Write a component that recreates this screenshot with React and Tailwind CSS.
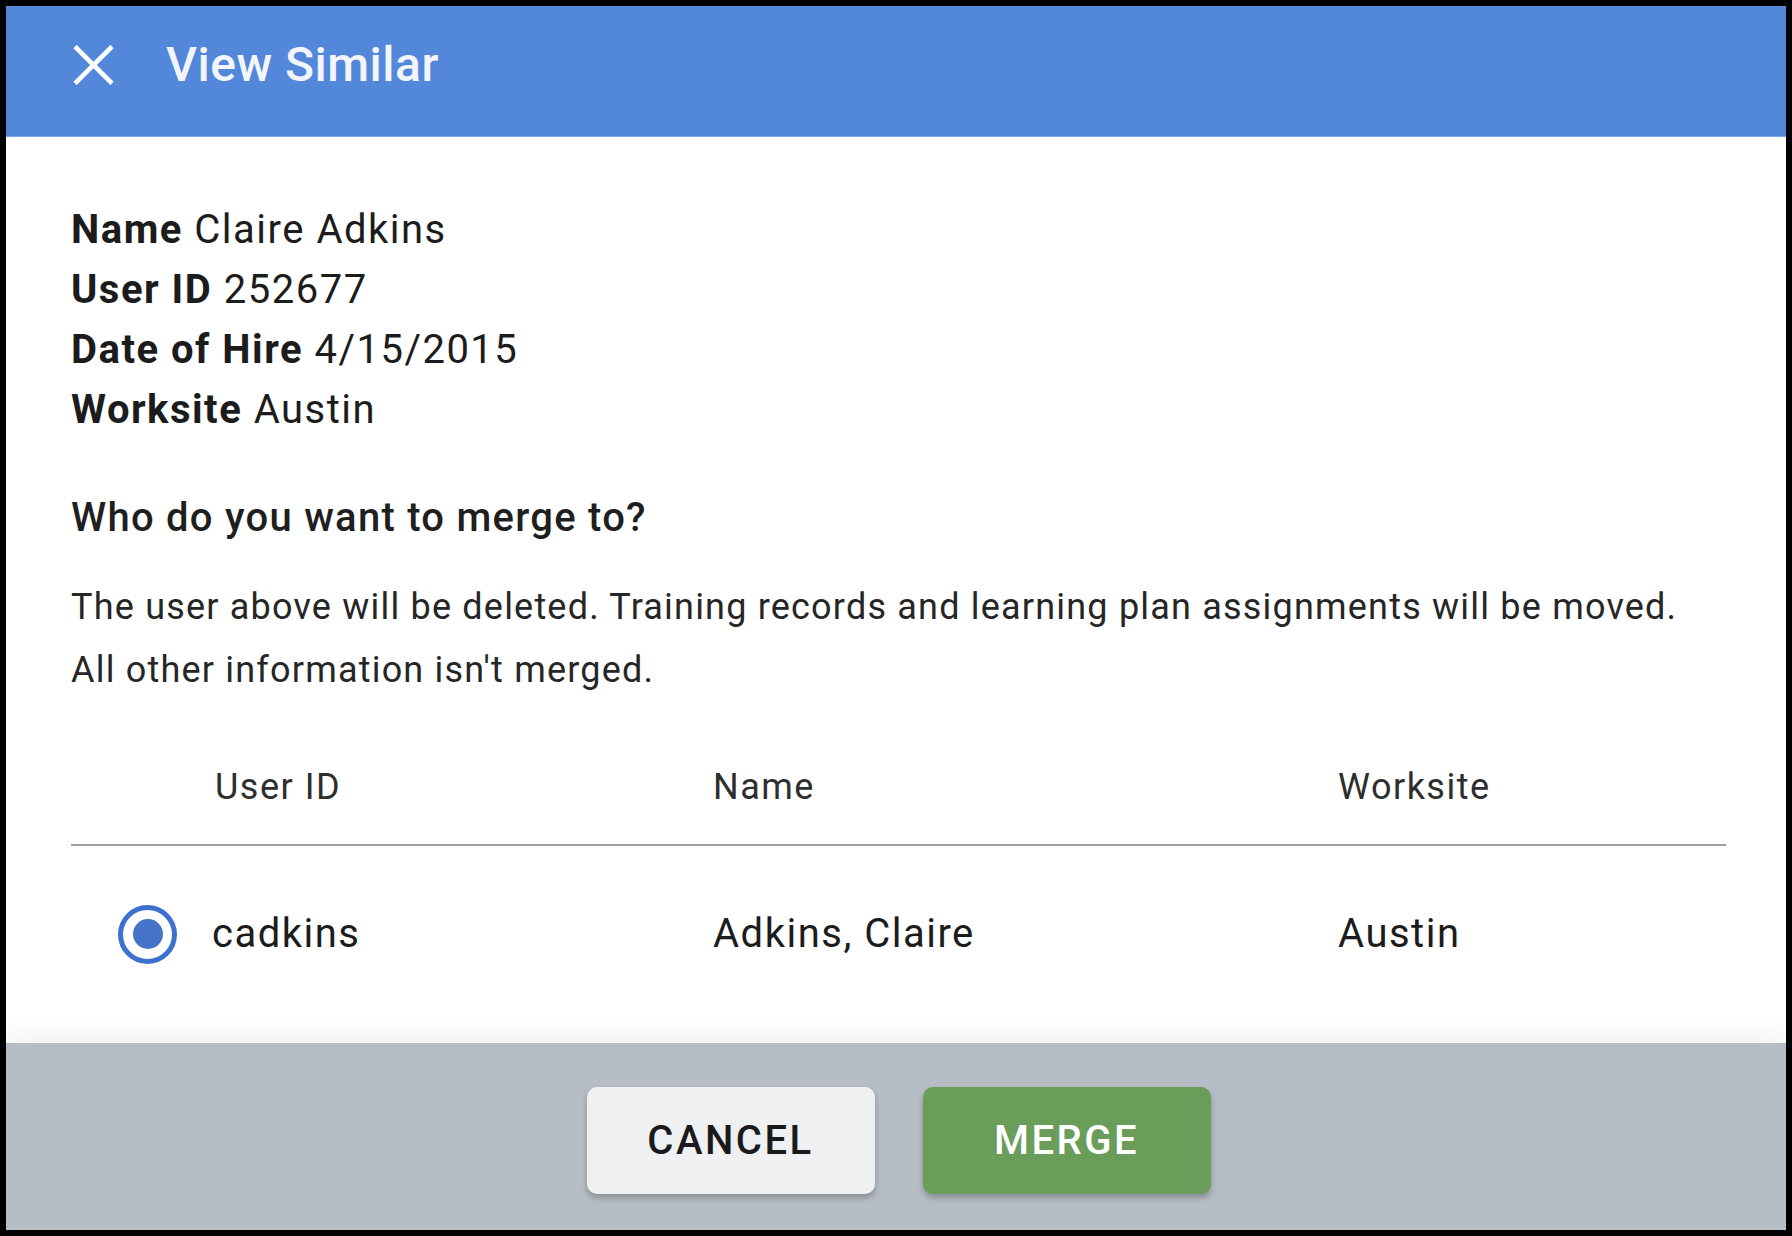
export default function App() {
  const font = { fontFamily: 'Roboto, "Noto Sans", sans-serif' };
  return (
    <div className="w-[1792px] h-[1236px] bg-black p-[6px]" style={font}>
      <div className="w-full h-full bg-white flex flex-col overflow-hidden">
        <div className="h-[131px] shrink-0 bg-[#5387d9] border-b border-[#80a6e6] flex items-center pl-[67px] pb-[12px]">
          <svg width="41" height="40" viewBox="0 0 41 40" className="shrink-0">
            <line x1="2" y1="1.5" x2="39" y2="38.5" stroke="#ffffff" strokeWidth="4.6" />
            <line x1="39" y1="1.5" x2="2" y2="38.5" stroke="#ffffff" strokeWidth="4.6" />
          </svg>
          <div className="ml-[52px] text-[48px] font-medium text-[#f2f5fb] tracking-[0.5px] leading-none">
            View Similar
          </div>
        </div>

        <div className="flex-1 pl-[65px] pr-[60px] pt-[63px]">
          <div className="text-[40px] leading-[60px] tracking-[1.5px] text-[#1c1c1c]">
            <div><span className="font-bold">Name</span> Claire Adkins</div>
            <div><span className="font-bold">User ID</span> 252677</div>
            <div><span className="font-bold">Date of Hire</span> 4/15/2015</div>
            <div><span className="font-bold">Worksite</span> Austin</div>
          </div>

          <div className="mt-[48px] text-[40px] leading-[60px] font-medium tracking-[1.25px] text-[#1f1f1f]">
            Who do you want to merge to?
          </div>

          <div className="mt-[28px] text-[36px] leading-[63px] tracking-[1.2px] text-[#262626]">
            The user above will be deleted. Training records and learning plan assignments will be moved.
            <br />
            All other information isn't merged.
          </div>

          <div className="mt-[61px]">
            <div className="grid grid-cols-[642px_625px_1fr] text-[36px] leading-[48px] tracking-[1.5px] text-[#2e2e2e] pb-[33px] border-b-2 border-[#a0a0a0]">
              <div className="pl-[144px]">User ID</div>
              <div>Name</div>
              <div>Worksite</div>
            </div>
            <div className="mt-[58px] grid grid-cols-[642px_625px_1fr] items-center text-[40px] leading-[60px] tracking-[1.5px] text-[#1c1c1c]">
              <div className="flex items-center pl-[47px]">
                <div className="w-[59px] h-[59px] rounded-full border-[5px] border-[#3d71d0] flex items-center justify-center shrink-0">
                  <div className="w-[30px] h-[30px] rounded-full bg-[#4473c9]" />
                </div>
                <span className="ml-[35px]">cadkins</span>
              </div>
              <div>Adkins, Claire</div>
              <div>Austin</div>
            </div>
          </div>
        </div>

        <div className="h-[187px] shrink-0 bg-[#b6bdc4] shadow-[0_-10px_22px_rgba(0,0,0,0.05)] flex items-center justify-center gap-[48px] pt-[8px] pl-[5px]">
          <div className="w-[288px] h-[107px] rounded-[10px] bg-[#eff0f2] shadow-[0_4px_6px_rgba(0,0,0,0.25)] flex items-center justify-center text-[40px] font-medium tracking-[2.5px] text-[#1a1a1a]">
            CANCEL
          </div>
          <div className="w-[288px] h-[107px] rounded-[10px] bg-[#6a9c5a] shadow-[0_4px_6px_rgba(0,0,0,0.25)] flex items-center justify-center text-[40px] font-medium tracking-[2.5px] text-white">
            MERGE
          </div>
        </div>
      </div>
    </div>
  );
}
